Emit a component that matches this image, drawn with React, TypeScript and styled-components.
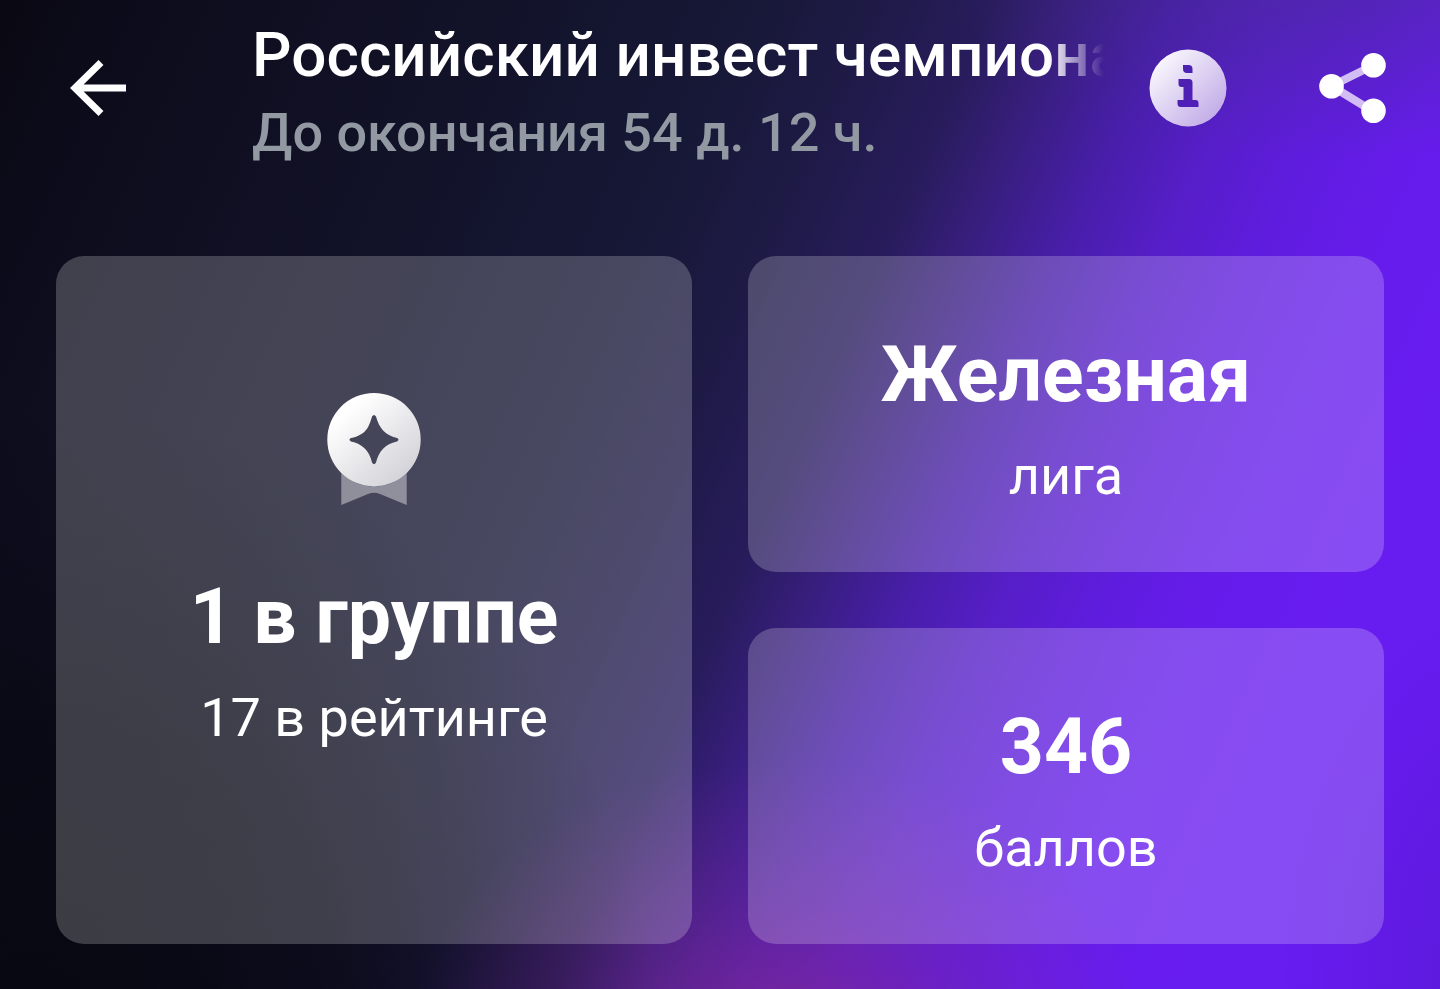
import React from "react";
import styled, { createGlobalStyle } from "styled-components";

const GlobalStyle = createGlobalStyle`
  * {
    box-sizing: border-box;
  }

  body {
    margin: 0;
    background: #080712;
  }
`;

const Screen = styled.div`
  width: 1440px;
  height: 989px;
  overflow: hidden;
  font-family: Roboto, sans-serif;
  color: #fff;
  background:
    radial-gradient(ellipse 370px 280px at 780px 1040px, rgba(142, 42, 142, 0.66), rgba(132, 42, 146, 0.3) 50%, rgba(120, 40, 150, 0) 100%),
    radial-gradient(ellipse 400px 210px at 1340px -50px, rgba(70, 46, 140, 0.6), rgba(78, 44, 160, 0) 100%),
    radial-gradient(ellipse 620px 660px at 40px 1060px, rgba(6, 6, 14, 0.9), rgba(6, 6, 14, 0.65) 50%, rgba(6, 6, 14, 0) 100%),
    radial-gradient(ellipse 260px 400px at 1540px 989px, rgba(70, 20, 170, 0.4), rgba(70, 20, 170, 0) 100%),
    linear-gradient(114deg, #090812 0%, #0d0c1c 8%, #100f22 16%, #12132a 28%, #171837 40%, #1d1a44 46%, #281c5c 53%, #371e7c 57%, #481eaa 62.5%, #561ec8 67.500%, #5f1cde 73%, #651cea 78%, #681cf0 84%, #661cf0 100%);
`;

const Header = styled.header`
  display: flex;
  height: 256px;
  padding-left: 56px;
`;

const IconButton = styled.button<{ $left: number; $top: number }>`
  display: block;
  flex: none;
  height: fit-content;
  margin: ${({ $top }) => $top}px 0 0 ${({ $left }) => $left}px;
  padding: 0;
  border: 0;
  background: none;

  svg {
    display: block;
  }
`;

const Titles = styled.div`
  width: 852px;
  margin: 18px 0 0 125px;
  white-space: nowrap;
`;

const Title = styled.h1`
  margin: 0;
  font-size: 62px;
  font-weight: 500;
  letter-spacing: 0.07px;
  line-height: 74px;
  overflow: hidden;
  mask-image: linear-gradient(90deg, #000 796px, transparent 852px);
`;

const Subtitle = styled.p`
  margin: 4px 0 0;
  color: #9299a2;
  font-size: 54px;
  font-weight: 500;
  line-height: 74px;
`;

const Cards = styled.main`
  display: grid;
  grid-template-columns: 636px 636px;
  grid-template-rows: 316px 316px;
  gap: 56px;
  padding: 0 56px;
`;

const Card = styled.section<{ $tall?: boolean }>`
  grid-row: ${({ $tall }) => ($tall ? "span 2" : "auto")};
  display: flex;
  flex-direction: column;
  align-items: center;
  padding-top: ${({ $tall }) => ($tall ? 136 : 74)}px;
  border-radius: 28px;
  background: rgba(255, 255, 255, 0.21);
`;

const Value = styled.div`
  font-size: 77px;
  font-weight: 700;
  line-height: 90px;
`;

const Label = styled.div`
  margin-top: 24px;
  font-size: 54px;
  line-height: 64px;
`;

const Medal = styled.svg`
  display: block;
  margin-bottom: 66px;
`;

const BackIcon = () => (
  <svg width="58" height="60" viewBox="0 0 58 60" fill="none" stroke="#fff" strokeWidth="7">
    <path d="M57 30H6M32 4.500L6 30L32 55.500" />
  </svg>
);

const InfoIcon = () => (
  <svg width="78" height="78" viewBox="0 0 78 78">
    <defs>
      <linearGradient id="info" x1="0.1" y1="0.1" x2="0.9" y2="0.9">
        <stop offset="0" stopColor="#fbfafd" />
        <stop offset="1" stopColor="#c0a9e7" />
      </linearGradient>
    </defs>
    <path
      fill="url(#info)"
      fillRule="evenodd"
      d="M39 .5a38.500 38.500 0 1 1 0 77a38.500 38.500 0 1 1 0-77ZM34 16h5.500q4 0 4 4v4h-5.500q-4 0-4-4ZM29.500 30h10.500q3.500 0 3.500 3.500v17.500h3q3 0 3 3v4H32q-3.500 0-3.500-3.500v-3.500h6v-13h-2q-3 0-3-3Z"
    />
  </svg>
);

const ShareIcon = () => (
  <svg width="68" height="72" viewBox="0 0 68 72" fill="#fff">
    <path d="M12.500 34L55 13M12.500 34L55 60" stroke="#d2bdf4" strokeWidth="8" />
    <circle cx="12.500" cy="34.200" r="12.300" />
    <circle cx="54.500" cy="13.200" r="12.300" />
    <circle cx="54.500" cy="58.700" r="12.300" />
  </svg>
);

const MedalIcon = () => (
  <Medal width="96" height="114" viewBox="0 0 96 114">
    <defs>
      <linearGradient id="medal" x1="0.15" y1="0.1" x2="0.85" y2="0.9">
        <stop offset="0.1" stopColor="#fff" />
        <stop offset="1" stopColor="#d2d2d8" />
      </linearGradient>
    </defs>
    <path
      fill="#fff"
      fillOpacity="0.4"
      d="M15.300 81A46.700 46.700 0 0 0 80.700 81V113L54 102Q48 99.500 42 102L15.300 113Z"
    />
    <path
      fill="url(#medal)"
      fillRule="evenodd"
      d="M48 1a46.700 46.700 0 1 1 0 93.400a46.700 46.700 0 1 1 0-93.400ZM46 24.500C43 35 40 43 25 46Q22 47.700 25 49.500C36 52 43 58 46 70.500Q48 74 50 70.500C53 59 59 52 71 49.500Q74 47.700 71 46C59 43 53 36 50 24.500Q48 21.500 46 24.500Z"
    />
  </Medal>
);

interface StatProps {
  value: string;
  label: string;
  tall?: boolean;
  children?: React.ReactNode;
}

const Stat: React.FC<StatProps> = ({ value, label, tall, children }) => (
  <Card $tall={tall}>
    {children}
    <Value>{value}</Value>
    <Label>{label}</Label>
  </Card>
);

const App: React.FC = () => (
  <>
    <GlobalStyle />
    <Screen>
      <Header>
        <IconButton $left={13} $top={58} aria-label="Назад">
          <BackIcon />
        </IconButton>
        <Titles>
          <Title>Российский инвест чемпионат</Title>
          <Subtitle>До окончания 54 д. 12 ч.</Subtitle>
        </Titles>
        <IconButton $left={45} $top={49} aria-label="Информация">
          <InfoIcon />
        </IconButton>
        <IconButton $left={92} $top={52} aria-label="Поделиться">
          <ShareIcon />
        </IconButton>
      </Header>
      <Cards>
        <Stat tall value="1 в группе" label="17 в рейтинге">
          <MedalIcon />
        </Stat>
        <Stat value="Железная" label="лига" />
        <Stat value="346" label="баллов" />
      </Cards>
    </Screen>
  </>
);

export default App;
